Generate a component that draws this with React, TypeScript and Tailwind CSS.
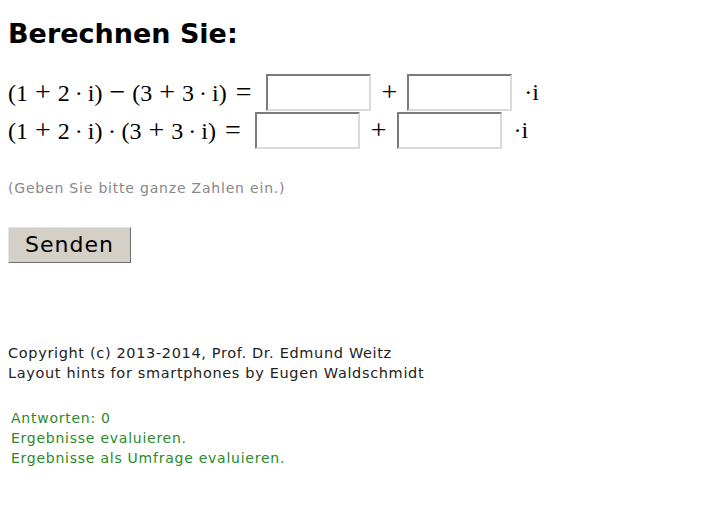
import React from "react";

const sans = "font-['DejaVu_Sans','Verdana',sans-serif]";
const serif = "font-['Liberation_Serif','DejaVu_Serif',serif]";

function Box({ ml }: { ml: string }) {
  return (
    <span
      className={`${ml} inline-block w-[105px] h-[37px] bg-white border-2 border-t-[#7a7a7a] border-l-[#7a7a7a] border-r-[#dadada] border-b-[#dadada]`}
    />
  );
}

function Group({ a, b }: { a: string; b: string }) {
  return (
    <>
      <span>(</span>
      <span>{a}</span>
      <span className="mx-[7px] text-[28px]">+</span>
      <span>{b}</span>
      <span className="mx-[5px]">·</span>
      <span>i</span>
      <span>)</span>
    </>
  );
}

function Row({ op, opCls }: { op: string; opCls: string }) {
  return (
    <div className="flex items-center h-[38px]">
      <span className="flex items-baseline">
        <Group a="1" b="2" />
        <span className={opCls}>{op}</span>
        <Group a="3" b="3" />
        <span className="ml-[9px] text-[28px]">=</span>
      </span>
      <Box ml="ml-[14px]" />
      <span className="ml-[11px] text-[28px]">+</span>
      <Box ml="ml-[10px]" />
      <span className="ml-[12px]">·i</span>
    </div>
  );
}

export default function App() {
  return (
    <div className={`${sans} bg-white w-[720px] h-[520px] px-2 pt-[18px] text-black`}>
      <h1 className="text-[27px] font-bold leading-[32px]">Berechnen Sie:</h1>
      <div className={`${serif} mt-[23px] text-[24px] leading-[30px]`}>
        <Row op="−" opCls="mx-[7px] text-[28px]" />
        <Row op="·" opCls="mx-[5.5px]" />
      </div>
      <p className="mt-[31px] text-[14px] leading-[16px] tracking-[0.8px] text-[#888888]">
        (Geben Sie bitte ganze Zahlen ein.)
      </p>
      <button className="mt-[31px] block w-[123px] h-[36px] bg-[#d4d0c8] border border-t-[#e8e6e0] border-l-[#e8e6e0] border-r-[#707070] border-b-[#707070] text-[22px] leading-none tracking-[1px] text-black">
        Senden
      </button>
      <div className="mt-[80px] text-[14.5px] leading-[20px] tracking-[0.65px] text-[#222222]">
        <div>Copyright (c) 2013-2014, Prof. Dr. Edmund Weitz</div>
        <div>Layout hints for smartphones by Eugen Waldschmidt</div>
      </div>
      <div className="mt-[25px] ml-[3px] text-[14px] leading-[20px] tracking-[0.75px] text-[#2a8a2a]">
        <div>Antworten: 0</div>
        <div>Ergebnisse evaluieren.</div>
        <div>Ergebnisse als Umfrage evaluieren.</div>
      </div>
    </div>
  );
}
